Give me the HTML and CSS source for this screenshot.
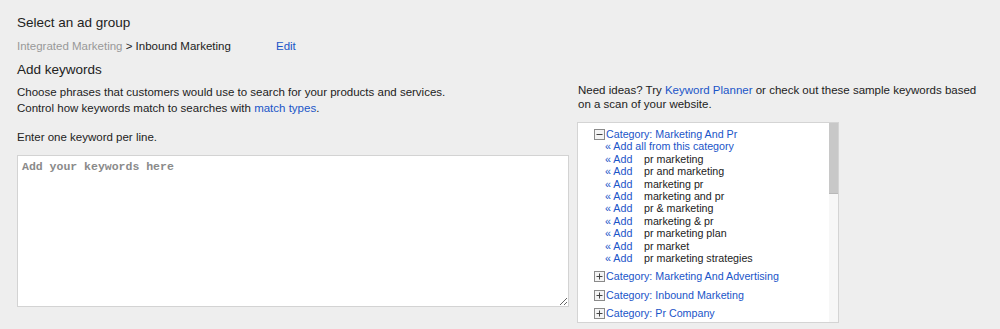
FILE: index.html
```html
<!DOCTYPE html>
<html lang="en">
<head>
  <meta charset="UTF-8" />
  <title>Add keywords</title>
  <link rel="stylesheet" href="styles.css">
</head>
<body>
  <h2 class="title">Select an ad group</h2>
  <div class="crumbs">
    <span class="path"><span class="muted">Integrated Marketing</span> &gt; Inbound Marketing</span>
    <a href="#">Edit</a>
  </div>
  <h2 class="title add-title">Add keywords</h2>

  <div class="columns">
    <div class="left">
      <p class="desc">Choose phrases that customers would use to search for your products and services.<br>
        Control how keywords match to searches with <a href="#">match types</a>.</p>
      <p class="hint">Enter one keyword per line.</p>
      <textarea class="keywords" placeholder="Add your keywords here"></textarea>
    </div>

    <div class="right">
      <p class="ideas">Need ideas? Try <a href="#">Keyword Planner</a> or check out these sample keywords based<br>on a scan of your website.</p>
      <div class="samples">
        <div class="list">
          <div class="cat open">
            <svg class="toggle" width="11" height="11" viewBox="0 0 11 11"><rect x="0.5" y="0.5" width="10" height="10" fill="#f4f4f4" stroke="#8a8a8a"/><path d="M2.5 5.5h6" stroke="#444"/></svg>
            <a href="#">Category: Marketing And Pr</a>
          </div>
          <div class="items">
            <a href="#" class="row">« Add all from this category</a>
            <div class="row"><a href="#">« Add</a><span>pr marketing</span></div>
            <div class="row"><a href="#">« Add</a><span>pr and marketing</span></div>
            <div class="row"><a href="#">« Add</a><span>marketing pr</span></div>
            <div class="row"><a href="#">« Add</a><span>marketing and pr</span></div>
            <div class="row"><a href="#">« Add</a><span>pr &amp; marketing</span></div>
            <div class="row"><a href="#">« Add</a><span>marketing &amp; pr</span></div>
            <div class="row"><a href="#">« Add</a><span>pr marketing plan</span></div>
            <div class="row"><a href="#">« Add</a><span>pr market</span></div>
            <div class="row"><a href="#">« Add</a><span>pr marketing strategies</span></div>
          </div>
          <div class="cat">
            <svg class="toggle" width="11" height="11" viewBox="0 0 11 11"><rect x="0.5" y="0.5" width="10" height="10" fill="#f4f4f4" stroke="#8a8a8a"/><path d="M2.5 5.5h6M5.5 2.5v6" stroke="#444"/></svg>
            <a href="#">Category: Marketing And Advertising</a>
          </div>
          <div class="cat">
            <svg class="toggle" width="11" height="11" viewBox="0 0 11 11"><rect x="0.5" y="0.5" width="10" height="10" fill="#f4f4f4" stroke="#8a8a8a"/><path d="M2.5 5.5h6M5.5 2.5v6" stroke="#444"/></svg>
            <a href="#">Category: Inbound Marketing</a>
          </div>
          <div class="cat">
            <svg class="toggle" width="11" height="11" viewBox="0 0 11 11"><rect x="0.5" y="0.5" width="10" height="10" fill="#f4f4f4" stroke="#8a8a8a"/><path d="M2.5 5.5h6M5.5 2.5v6" stroke="#444"/></svg>
            <a href="#">Category: Pr Company</a>
          </div>
        </div>
        <div class="scrollbar"><div class="thumb"></div></div>
      </div>
    </div>
  </div>
</body>
</html>
```

FILE: styles.css
```css
* {
  box-sizing: border-box;
}
body {
  margin: 0;
  padding: 14px 17px 0;
  background: #eeeeee;
  color: #222;
  font-family: 'Liberation Sans', Arial, sans-serif;
  font-size: 11.5px;
}
a {
  color: #1a55c8;
  text-decoration: none;
}
p {
  margin: 0;
}
.title {
  margin: 0;
  font-size: 13.5px;
  font-weight: normal;
  line-height: 18px;
}
.crumbs {
  margin-top: 6px;
  line-height: 16px;
  display: flex;
}
.crumbs .path {
  width: 259px;
}
.muted {
  color: #999;
}
.add-title {
  margin-top: 7px;
}
.columns {
  display: flex;
  gap: 9px;
  margin-top: 5px;
}
.left {
  width: 552px;
}
.desc {
  line-height: 16px;
}
.hint {
  margin-top: 13px;
  line-height: 16px;
}
.keywords {
  display: block;
  width: 552px;
  height: 152px;
  margin-top: 10px;
  padding: 4px;
  border: 1px solid #d3d3d3;
  background: #fff;
  font-family: 'Liberation Mono', 'Courier New', monospace;
  font-size: 11.5px;
  resize: vertical;
}
.keywords::placeholder {
  color: #8a8a8a;
  font-weight: bold;
}
.right {
  width: 402px;
}
.ideas {
  line-height: 13.5px;
}
.samples {
  display: flex;
  width: 262px;
  height: 201px;
  margin-top: 11px;
  margin-left: -1px;
  border: 1px solid #d4d4d4;
  background: #fff;
  overflow: hidden;
}
.list {
  flex: 1;
  padding: 5px 0 0 16px;
  font-size: 10.7px;
  line-height: 12.4px;
}
.cat {
  display: flex;
  align-items: center;
  gap: 1px;
  line-height: 13px;
  margin-top: 5.6px;
}
.cat.open {
  margin-top: 0;
  line-height: 12.4px;
}
.toggle {
  flex: none;
}
.items {
  padding-left: 11px;
}
.items .row {
  display: flex;
}
.items .row a {
  width: 39px;
}
.items .row span {
  color: #222;
}
a.row {
  display: block;
}
.scrollbar {
  width: 9px;
  background: #f7f7f7;
}
.thumb {
  height: 71px;
  background: #c8c8c8;
  border-bottom: 1px solid #b8b8b8;
}
```
